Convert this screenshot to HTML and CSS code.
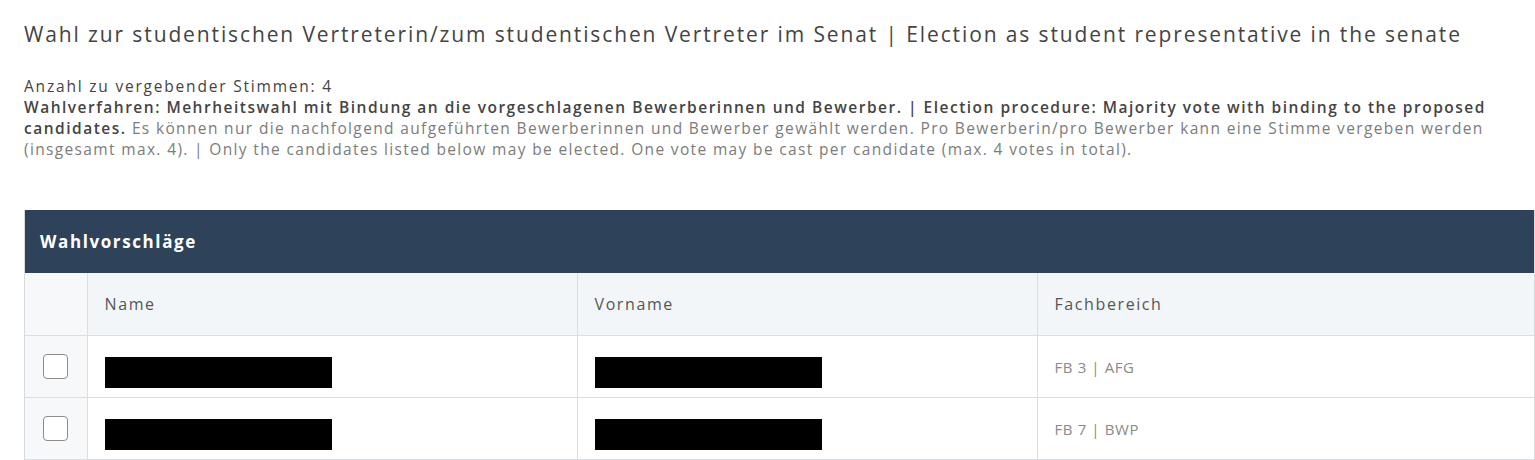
FILE: index.html
```html
<!DOCTYPE html>
<html lang="de">
<head>
<meta charset="utf-8">
<title>Wahl</title>
<link rel="stylesheet" href="styles.css">
</head>
<body>
<main class="page">
  <h1 class="title">Wahl zur studentischen Vertreterin/zum studentischen Vertreter im Senat | Election as student representative in the senate</h1>
  <div class="info">
    <p class="count">Anzahl zu vergebender Stimmen: 4</p>
    <p class="proc"><strong>Wahlverfahren: Mehrheitswahl mit Bindung an die vorgeschlagenen Bewerberinnen und Bewerber. | Election procedure: Majority vote with binding to the proposed candidates.</strong> Es können nur die nachfolgend aufgeführten Bewerberinnen und Bewerber gewählt werden. Pro Bewerberin/pro Bewerber kann eine Stimme vergeben werden (insgesamt max. 4). | Only the candidates listed below may be elected. One vote may be cast per candidate (max. 4 votes in total).</p>
  </div>
  <section class="card">
    <div class="card-head">Wahlvorschläge</div>
    <table class="list">
      <colgroup>
        <col class="c-check">
        <col class="c-name">
        <col class="c-first">
        <col class="c-dept">
      </colgroup>
      <thead>
        <tr>
          <th class="check"></th>
          <th>Name</th>
          <th>Vorname</th>
          <th>Fachbereich</th>
        </tr>
      </thead>
      <tbody>
        <tr>
          <td class="check"><input type="checkbox" class="box"></td>
          <td><span class="redact"></span></td>
          <td><span class="redact"></span></td>
          <td class="dept">FB 3 | AFG</td>
        </tr>
        <tr>
          <td class="check"><input type="checkbox" class="box"></td>
          <td><span class="redact"></span></td>
          <td><span class="redact"></span></td>
          <td class="dept">FB 7 | BWP</td>
        </tr>
      </tbody>
    </table>
  </section>
</main>
</body>
</html>
```

FILE: styles.css
```css
html, body {
  margin: 0;
  padding: 0;
  background: #ffffff;
  overflow: hidden;
}
body {
  font-family: "Open Sans", "DejaVu Sans", sans-serif;
  color: #555;
}
.page {
  width: 1511px;
  padding: 20px 0 0 24px;
}
.title {
  margin: 0;
  font-size: 21px;
  font-weight: 500;
  line-height: 28px;
  letter-spacing: 1.88px;
  color: #444;
  white-space: nowrap;
}
.info {
  margin-top: 28px;
  font-size: 15.5px;
  line-height: 21px;
  letter-spacing: 1.35px;
  color: #7c7c7c;
}
.info p {
  margin: 0;
}
.count {
  color: #444;
  font-weight: 500;
  letter-spacing: 1.8px;
}
.proc strong {
  font-weight: 600;
  letter-spacing: 1.5px;
  color: #444;
}
.card {
  margin-top: 50px;
  border-left: 1px solid #d6dadd;
  border-right: 1px solid #d6dadd;
}
.card-head {
  height: 63px;
  box-sizing: border-box;
  padding: 0 15px;
  display: flex;
  align-items: center;
  background: #2e425a;
  color: #ffffff;
  font-size: 17px;
  font-weight: 700;
  letter-spacing: 1.6px;
}
.list {
  width: 100%;
  border-collapse: collapse;
  table-layout: fixed;
}
.c-check { width: 62px; }
.c-name { width: 490px; }
.c-first { width: 460px; }
.list th, .list td {
  border: 1px solid #dcdfe2;
  padding: 0 0 0 17px;
  text-align: left;
  vertical-align: middle;
}
.list tr > :first-child { border-left: none; }
.list tr > :last-child { border-right: none; }
.list thead tr:first-child th { border-top: none; }
.list th {
  height: 62px;
  background: #f3f6f8;
  font-size: 16px;
  font-weight: 400;
  letter-spacing: 1.6px;
  color: #555;
}
.list td {
  height: 61px;
  background: #ffffff;
}
.list th.check, .list td.check {
  padding: 0;
  text-align: center;
  background: #f6f8fa;
}
.box {
  appearance: none;
  -webkit-appearance: none;
  width: 25px;
  height: 25px;
  margin: 0;
  border: 1.5px solid #8c8c8c;
  border-radius: 4px;
  background: #fff;
  display: inline-block;
  vertical-align: middle;
}
.redact {
  display: block;
  width: 227px;
  height: 31px;
  margin-top: 11px;
  background: #000;
}
.dept {
  font-size: 15px;
  letter-spacing: 0.6px;
  color: #8a8a8a;
}
```
